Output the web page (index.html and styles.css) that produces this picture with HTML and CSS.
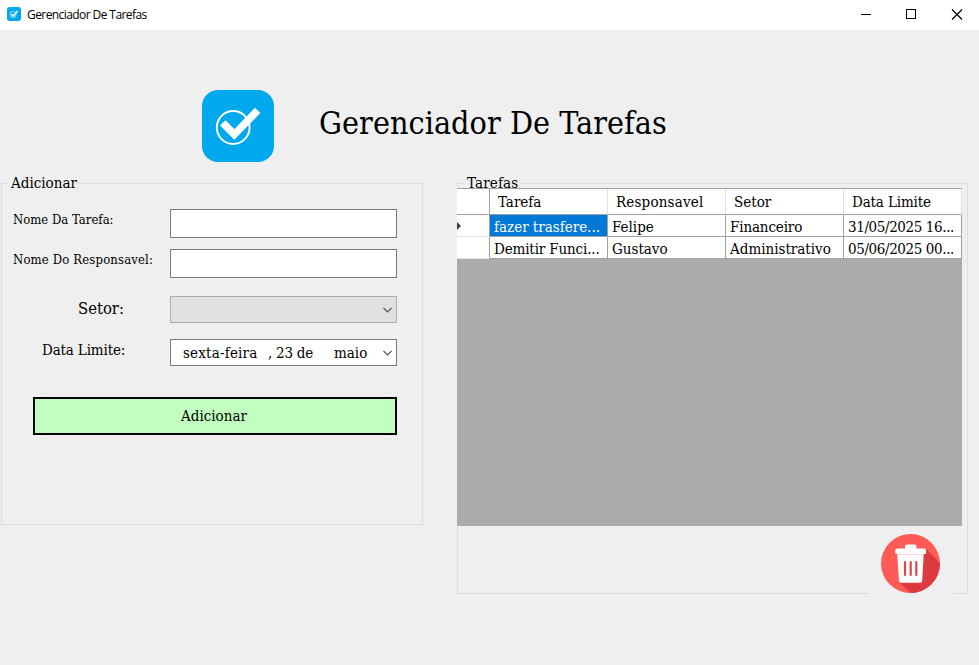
FILE: index.html
```html
<!DOCTYPE html>
<html lang="pt-BR">
<head>
<meta charset="utf-8">
<title>Gerenciador De Tarefas</title>
<link rel="stylesheet" href="styles.css">
</head>
<body>
<div class="titlebar">
  <svg class="app-icon" viewBox="0 0 72 72"><rect width="72" height="72" rx="15" fill="#00a8ee"/><circle cx="31" cy="38" r="16" fill="none" stroke="#fff" stroke-width="3"/><path d="M22 36 32 46 55 21" fill="none" stroke="#fff" stroke-width="7"/></svg>
  <span class="app-name">Gerenciador De Tarefas</span>
  <svg class="controls" width="104" height="30" viewBox="0 0 104 30" fill="none" stroke="#000" shape-rendering="crispEdges"><path d="M0 14.5h10M45.500 9.500h9v9h-9z"/><path shape-rendering="auto" stroke-width="1.200" d="M91 9.500l10 10M101 9.500l-10 10"/></svg>
</div>
<header class="header">
  <svg width="72" height="72" viewBox="0 0 72 72"><rect width="72" height="72" rx="16" fill="#00a8ee"/><circle cx="31.200" cy="37.500" r="16.400" fill="none" stroke="#fff" stroke-width="2"/><path d="M20.800 32.800 32.300 44.500 55.700 20.300" fill="none" stroke="#fff" stroke-width="7.500"/></svg>
  <h1 class="title">Gerenciador De Tarefas</h1>
</header>
<main class="main">
  <section class="group add">
    <h2 class="legend l-add">Adicionar</h2>
    <div class="form">
      <div class="row r1"><label class="small name">Nome Da Tarefa:</label><div class="field"></div></div>
      <div class="row r2"><label class="small resp">Nome Do Responsavel:</label><div class="field"></div></div>
      <div class="row r3"><label class="sector">Setor:</label><div class="field disabled"><svg class="chev" width="9" height="6" viewBox="0 0 9 6"><path d="M.5 1 4.500 5 8.500 1"/></svg></div></div>
      <div class="row r4"><label class="limit">Data Limite:</label><div class="field date"><span class="weekday">sexta-feira</span><span class="day">, 23 de</span><span class="month">maio</span><svg class="chev" width="9" height="6" viewBox="0 0 9 6"><path d="M.5 1 4.500 5 8.500 1"/></svg></div></div>
    </div>
    <button class="submit"><span>Adicionar</span></button>
  </section>
  <section class="group tasks">
    <h2 class="legend l-tasks">Tarefas</h2>
    <div class="grid">
      <div class="line head"><div class="rowhead"></div><div><span>Tarefa</span></div><div><span class="wide">Responsavel</span></div><div><span>Setor</span></div><div><span class="tight">Data Limite</span></div></div>
      <div class="line"><div class="rowhead"><svg width="4" height="8" viewBox="0 0 4 8"><path d="M0 0 4 4 0 8z" fill="#404040"/></svg></div><div class="selected"><span>fazer trasfere...</span></div><div><span>Felipe</span></div><div><span class="tight">Financeiro</span></div><div><span class="stamp">31/05/2025 16...</span></div></div>
      <div class="line"><div class="rowhead"></div><div><span class="tight">Demitir Funci...</span></div><div><span>Gustavo</span></div><div><span>Administrativo</span></div><div><span class="stamp">05/06/2025 00...</span></div></div>
    </div>
    <div class="trash">
      <svg width="59" height="59" viewBox="0 0 59 59"><defs><clipPath id="disc"><circle cx="29.500" cy="29.500" r="29.500"/></clipPath></defs><g clip-path="url(#disc)"><path d="M0 0h59v59H0z" fill="#ff5a55"/><path d="M45 15 62 32V62H33L18 48z" fill="#dc3a3d"/></g><path d="M24 14.500v-2q0-2 2-2h7.500q2 0 2 2v2H43q2 0 2 2V20H14.300v-3.500q0-2 2-2z" fill="#fff"/><path d="M16.300 21h26.400l-1.500 25.500q-.2 2.200-2 2.200H20q-1.800 0-2-2.200z" fill="#fff"/><path d="M16.300 20.500h26.400" stroke="#ffd9d8"/><path d="M24 28v13M29.700 28v13M35.300 28v13" stroke="#e04648" stroke-width="2.200" stroke-linecap="round"/></svg>
    </div>
  </section>
</main>
</body>
</html>
```
FILE: styles.css
```css
* { box-sizing: border-box; }
body { margin: 0; width: 979px; height: 665px; overflow: hidden; background: #efefef; color: #000; font: 15px/20px "DejaVu Serif Condensed", "DejaVu Serif", serif; font-stretch: condensed; }
h1, h2 { margin: 0; font-weight: 400; }
span, label, h1, h2 { white-space: nowrap; }
.titlebar { display: flex; align-items: center; height: 30px; padding: 0 18px 0 7px; background: #fff; font: 12px/16px "Open Sans", "Noto Sans", sans-serif; font-stretch: normal; }
.app-icon { width: 14px; height: 14px; margin-top: -2px; }
.app-name { margin-left: 6px; letter-spacing: -0.58px; }
.controls { margin-left: auto; margin-right: -4px; }
.header { display: flex; height: 146px; padding: 60px 0 0 202px; }
.title { margin: 10px 0 0 45px; font-size: 32px; line-height: 46px; letter-spacing: 0.03px; }
.main { display: flex; align-items: flex-start; gap: 34px; padding: 7px 0 0 1px; }
.group { border: 1px solid #dcdcdc; }
.add { width: 422px; height: 342px; }
.tasks { width: 511px; height: 411px; }
.legend { width: max-content; height: 20px; margin: -11px 0 0 6px; padding: 0 0 0 3px; background: #efefef; font-size: 15px; line-height: 20px; }
.l-add { width: 70px; }
.l-tasks { width: 56px; letter-spacing: 0.15px; }
.form { padding: 16px 25px 0 11px; }
.row { display: flex; justify-content: space-between; }
.row label { line-height: 20px; }
.row .small { margin-top: 1px; font-size: 13px; }
.resp { letter-spacing: 0.15px; }
.field { display: flex; align-items: center; width: 227px; height: 29px; border: 1px solid #7a7a7a; background: #fff; }
.r2 { margin-top: 11px; }
.r3 { margin-top: 18px; }
.r4 { margin-top: 16px; }
.r3 .field, .r4 .field { height: 27px; }
.field.disabled { border-color: #adadad; background: #e1e1e1; }
.row .sector { margin: 3px 0 0 65px; font-size: 16.5px; }
.row .limit { margin: 1px 0 0 29px; letter-spacing: -0.15px; }
.chev { margin: 1px 4px 0 auto; fill: none; stroke: #555; stroke-width: 1.2; }
.weekday { width: 85px; margin-left: 12px; letter-spacing: 0.2px; }
.day { width: 66px; letter-spacing: -0.25px; }
.submit { display: block; width: 364px; height: 38px; margin: 31px 0 0 31px; padding: 0 2px 0 0; border: 2px solid #000; border-radius: 0; background: #c0ffc0; color: #000; font: inherit; }
.grid { position: relative; height: 338px; width: 505px; margin: -5px 0 0 -1px; border-top: 1px solid #a0a0a0; background: #ababab; }
.line { display: grid; grid-template-columns: 33px repeat(4, 118px); height: 22px; }
.line > div { display: flex; align-items: center; padding: 2px 0 0 4px; background: #fff; border-right: 1px solid #a0a0a0; border-bottom: 1px solid #a0a0a0; overflow: hidden; }
.line > .rowhead { padding: 0; border-bottom-color: #e0e0e0; }
.line.head { height: 26px; }
.head > div { padding: 0 0 0 8px; border-right-color: #e0e0e0; }
.head > .rowhead { border-color: #a0a0a0; }
.line > .selected { background: #0078d7; color: #fff; }
.wide { letter-spacing: 0.18px; }
.tight { letter-spacing: -0.14px; }
.stamp { letter-spacing: -0.38px; }
.trash { position: relative; display: flex; justify-content: center; width: 84px; height: 70px; margin: 3px 0 0 411px; padding: 5px 2px 0 0; background: #efefef; }
```
